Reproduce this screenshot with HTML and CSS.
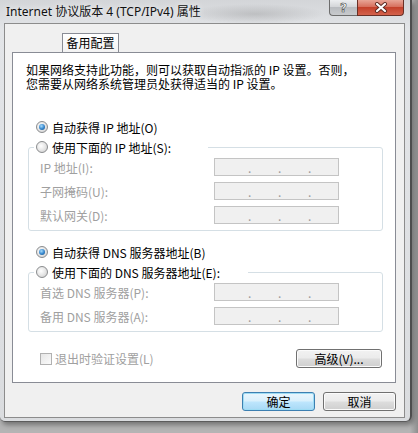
FILE: index.html
```html
<!DOCTYPE html>
<html lang="zh-CN">
<head>
<meta charset="utf-8">
<title>Internet 协议版本 4 (TCP/IPv4) 属性</title>
<link rel="stylesheet" href="styles.css">
</head>
<body>
<div class="win">
  <div class="titlebar">
    <span class="title">Internet 协议版本 4 (TCP/IPv4) 属性</span>
    <div class="caps">
      <div class="cap help"><span class="qm">?</span></div>
      <div class="cap close">
        <svg width="14" height="11" viewBox="0 0 14 11">
          <path d="M3 2 L11 9 M11 2 L3 9" stroke="#5a2a22" stroke-width="4" stroke-linecap="round"/>
          <path d="M3 2 L11 9 M11 2 L3 9" stroke="#ffffff" stroke-width="2.2" stroke-linecap="round"/>
        </svg>
      </div>
    </div>
  </div>
  <div class="client">
    <div class="tabs"><div class="tab">备用配置</div></div>
    <div class="page">
      <p class="desc">如果网络支持此功能，则可以获取自动指派的 IP 设置。否则，<br>您需要从网络系统管理员处获得适当的 IP 设置。</p>

      <div class="opt"><span class="radio on"></span><span>自动获得 IP 地址(O)</span></div>
      <fieldset class="group">
        <legend class="leg leg-ip"><span class="radio"></span><span>使用下面的 IP 地址(S):</span></legend>
        <div class="field"><span class="lbl">IP 地址(I):</span><span class="ip"><i>.</i><i>.</i><i>.</i></span></div>
        <div class="field"><span class="lbl">子网掩码(U):</span><span class="ip"><i>.</i><i>.</i><i>.</i></span></div>
        <div class="field"><span class="lbl">默认网关(D):</span><span class="ip"><i>.</i><i>.</i><i>.</i></span></div>
      </fieldset>

      <div class="opt opt-dns"><span class="radio on"></span><span>自动获得 DNS 服务器地址(B)</span></div>
      <fieldset class="group">
        <legend class="leg leg-dns"><span class="radio"></span><span>使用下面的 DNS 服务器地址(E):</span></legend>
        <div class="field"><span class="lbl">首选 DNS 服务器(P):</span><span class="ip"><i>.</i><i>.</i><i>.</i></span></div>
        <div class="field"><span class="lbl">备用 DNS 服务器(A):</span><span class="ip"><i>.</i><i>.</i><i>.</i></span></div>
      </fieldset>

      <div class="bottom">
        <span class="check"><span class="box"></span><span class="lbl">退出时验证设置(L)</span></span>
        <button class="btn adv">高级(V)...</button>
      </div>
    </div>
    <div class="actions">
      <button class="btn default">确定</button>
      <button class="btn">取消</button>
    </div>
  </div>
</div>
</body>
</html>
```

FILE: styles.css
```css
html, body {
  margin: 0;
  padding: 0;
}
body {
  width: 418px;
  height: 433px;
  overflow: hidden;
  background: linear-gradient(to right, #b4b4b4 0, #b4b4b4 410px, #8e8e8e 418px);
  font-family: "Noto Sans CJK SC", "Noto Sans", sans-serif;
  font-size: 12px;
  color: #000;
}

.win {
  width: 410px;
  height: 421px;
  border-right: 2px solid #4d4d4d;
  border-bottom: 1px solid #5c5c5c;
  border-bottom-right-radius: 6px;
  border-bottom-left-radius: 5px;
  background:
    radial-gradient(ellipse 70px 10px at 255px 14px, rgba(90,90,90,0.22), rgba(90,90,90,0) 100%),
    linear-gradient(to bottom, #d3d5d8 0, #e3e5e8 30px, #dadcdf 100%);
  box-shadow: 2px 3px 5px rgba(0,0,0,0.35);
  display: flex;
  flex-direction: column;
}

.titlebar {
  height: 23px;
  display: flex;
  align-items: flex-start;
}
.title {
  margin-left: 6px;
  line-height: 24px;
  font-family: "Noto Sans", "Noto Sans CJK SC", sans-serif;
  font-size: 12px;
  color: #111;
  text-shadow: 0 0 6px rgba(255,255,255,0.9);
}
.caps {
  margin-left: auto;
  margin-right: 6px;
  display: flex;
}
.cap {
  height: 16px;
  box-sizing: border-box;
  border: 1px solid #6d6d6d;
  border-top: none;
  display: flex;
  align-items: center;
  justify-content: center;
}
.help {
  width: 28px;
  border-right: none;
  border-bottom-left-radius: 4px;
  background: linear-gradient(to bottom, #eceef0 0, #d4d6d9 45%, #b9bcc0 50%, #c8cacd 100%);
}
.qm {
  font-family: "DejaVu Sans", sans-serif;
  font-weight: bold;
  font-size: 12px;
  line-height: 14px;
  color: #fff;
  -webkit-text-stroke: 0.6px #4b4b4b;
}
.close {
  width: 47px;
  border-bottom-right-radius: 4px;
  background: linear-gradient(to bottom, #e8a596 0, #d7705e 45%, #c4412b 50%, #d3624c 100%);
  border-color: #6a3026;
}

.client {
  margin-left: 4px;
  width: 399px;
  height: 393px;
  border: 1px solid #8c8c8c;
  background: #f0f0f0;
  display: flex;
  flex-direction: column;
}
.tabs {
  padding: 9px 0 0 57px;
  display: flex;
}
.tab {
  width: 55px;
  height: 18px;
  border: 1px solid #898c95;
  border-bottom: none;
  background: linear-gradient(to bottom, #ffffff, #f3f3f3);
  line-height: 18px;
  text-align: center;
  font-size: 12px;
}
.page {
  margin-left: 7px;
  width: 382px;
  height: 329px;
  border: 1px solid #898c95;
  background: #fff;
}
.desc {
  margin: 10px 0 0 13px;
  line-height: 14px;
  font-size: 12px;
}

.opt {
  margin-top: 26px;
  padding-left: 23px;
  height: 20px;
  display: flex;
  align-items: center;
  gap: 4px;
}
.opt-dns {
  margin-top: 11px;
}

.radio {
  width: 12px;
  height: 12px;
  flex: none;
  box-sizing: border-box;
  border: 1px solid #8a8c8e;
  border-radius: 50%;
  background: radial-gradient(circle at 40% 40%, #ffffff 0, #e6e6e6 50%, #c9c9c9 100%);
  display: flex;
  align-items: center;
  justify-content: center;
}
.radio.on::after {
  content: "";
  width: 6px;
  height: 6px;
  border-radius: 50%;
  background: radial-gradient(circle at 40% 35%, #a8dcfb 0, #3a8ad0 50%, #10487c 100%);
}

.group {
  margin: 0 12px 0 15px;
  padding: 1px 0 6px 0;
  border: 1px solid #d5dfe5;
  border-radius: 3px;
  min-width: 0;
}
.leg {
  margin-left: 5px;
  padding: 0 0 0 2px;
  box-sizing: border-box;
  height: 20px;
  display: flex;
  align-items: center;
  gap: 4px;
}
.leg-ip { width: 174px; }
.leg-dns { width: 214px; }

.field {
  display: grid;
  grid-template-columns: 174px 125px;
  align-items: center;
  height: 18px;
  padding-left: 11px;
  margin-top: 6px;
}
.field:first-of-type {
  margin-top: 0;
}
.lbl {
  color: #a0a0a0;
}
.ip {
  height: 18px;
  box-sizing: border-box;
  border: 1px solid #c4c4c4;
  background: #f0f0f0;
  display: flex;
  padding-left: 33px;
  line-height: 17px;
  color: #9a9a9a;
}
.ip i {
  font-style: normal;
  width: 30px;
  font-size: 12px;
}

.bottom {
  margin-top: 17px;
  padding: 0 13px 0 27px;
  display: flex;
  align-items: center;
  justify-content: space-between;
  height: 19px;
}
.check {
  display: flex;
  align-items: center;
  gap: 3px;
}
.box {
  width: 12px;
  height: 12px;
  box-sizing: border-box;
  border: 1px solid #b1b1b1;
  background: linear-gradient(135deg, #e6e6e6, #fbfbfb);
}

.btn {
  font-family: "Noto Sans CJK SC", "Noto Sans", sans-serif;
  font-size: 12px;
  color: #000;
  height: 19px;
  padding: 0;
  box-sizing: border-box;
  border: 1px solid #707070;
  border-radius: 3px;
  background: linear-gradient(to bottom, #f2f2f2 0, #ebebeb 48%, #dddddd 52%, #cfcfcf 100%);
  box-shadow: inset 0 0 0 1px #fbfbfb;
  line-height: 16px;
}
.adv {
  width: 86px;
}
.actions {
  margin-top: 9px;
  padding-right: 8px;
  display: flex;
  justify-content: flex-end;
  gap: 8px;
}
.actions .btn {
  width: 73px;
}
.btn.default {
  border-color: #3c7fb1;
  background: linear-gradient(to bottom, #eaf6fd 0, #d9f0fc 48%, #bee6fd 52%, #a7d9f5 100%);
  box-shadow: inset 0 0 0 1px #9edcf4;
}
```
